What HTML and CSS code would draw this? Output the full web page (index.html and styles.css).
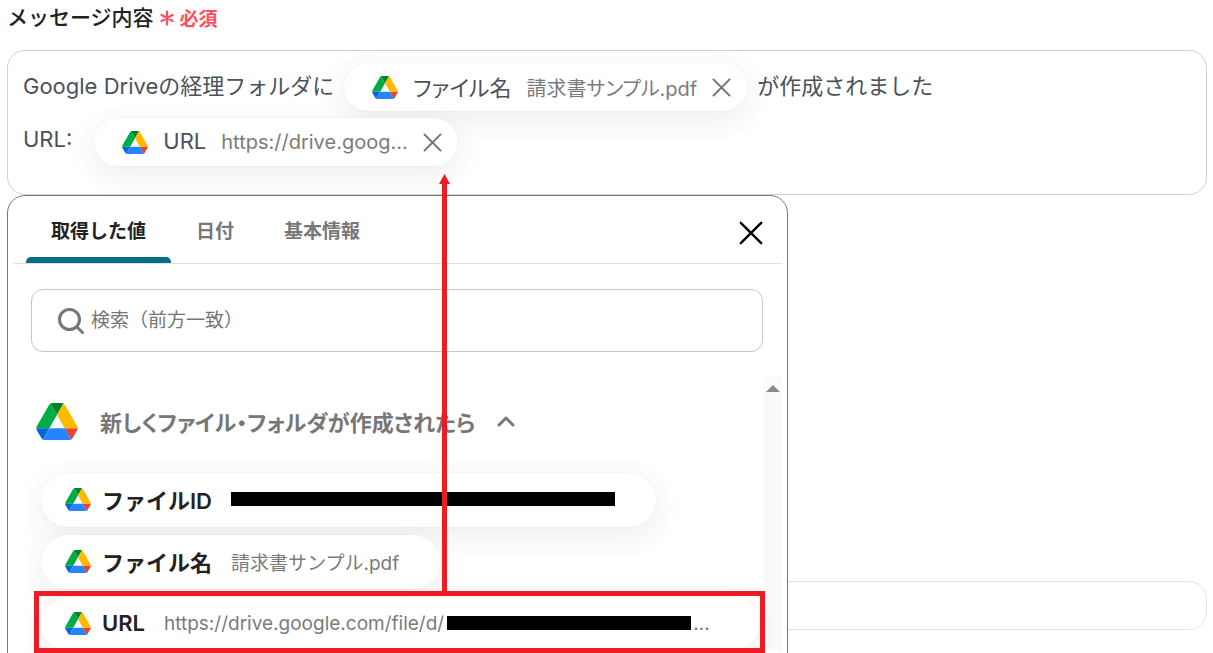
FILE: index.html
```html
<!DOCTYPE html>
<html lang="ja">
<head>
  <meta charset="UTF-8">
  <meta name="viewport" content="width=device-width, initial-scale=1.0">
  <title>メッセージ内容</title>
  <link rel="stylesheet" href="styles.css">
</head>
<body>
  <svg class="defs" aria-hidden="true">
    <symbol id="drive" viewBox="0 0 87.3 78">
      <path fill="#0066da" d="m6.6 66.85 3.85 6.65c.8 1.4 1.95 2.5 3.3 3.3l13.75-23.8h-27.5c0 1.55.4 3.1 1.2 4.5z"/>
      <path fill="#00ac47" d="m43.65 25-13.75-23.8c-1.35.8-2.5 1.9-3.3 3.3l-25.4 44a9.06 9.06 0 0 0 -1.2 4.5h27.5z"/>
      <path fill="#ea4335" d="m73.55 76.8c1.35-.8 2.5-1.9 3.3-3.3l1.6-2.75 7.65-13.25c.8-1.4 1.2-2.95 1.2-4.5h-27.5l5.85 11.5z"/>
      <path fill="#00832d" d="m43.65 25 13.75-23.8c-1.35-.8-2.9-1.2-4.5-1.2h-18.5c-1.6 0-3.15.45-4.5 1.2z"/>
      <path fill="#2684fc" d="m59.8 53h-32.3l-13.75 23.8c1.35.8 2.9 1.2 4.5 1.2h50.8c1.6 0 3.15-.45 4.5-1.2z"/>
      <path fill="#ffba00" d="m73.4 26.5-12.7-22c-.8-1.4-1.95-2.5-3.3-3.3l-13.75 23.8 16.15 28h27.45c0-1.55-.4-3.1-1.2-4.5z"/>
    </symbol>
    <symbol id="cross" viewBox="0 0 20 20">
      <path d="M1.5 1.5l17 17M18.5 1.5l-17 17" fill="none" stroke="currentColor" stroke-linecap="round"/>
    </symbol>
  </svg>

  <main class="page">
    <div class="field-label">
      <span id="message-label">メッセージ内容</span>
      <span class="required">
        <svg class="asterisk" viewBox="0 0 14 16"><path d="M7 1.5v13M1.5 5l11 6M12.5 5l-11 6" fill="none" stroke="currentColor" stroke-width="2.2" stroke-linecap="round"/></svg>
        必須
      </span>
    </div>

    <div class="field">
      <div class="editor" role="textbox" aria-labelledby="message-label" contenteditable="true">
        <div class="line">
          <span class="text">Google Driveの経理フォルダに</span>
          <span class="chip" contenteditable="false">
            <svg class="drive-sm"><use href="#drive"/></svg>
            <span class="chip-name">ファイル名</span>
            <span class="chip-value">請求書サンプル.pdf</span>
            <button type="button" class="chip-remove" aria-label="削除"><svg><use href="#cross"/></svg></button>
          </span>
          <span class="text">が作成されました</span>
        </div>
        <div class="line line-url">
          <span class="text">URL:</span>
          <span class="chip" contenteditable="false">
            <svg class="drive-sm"><use href="#drive"/></svg>
            <span class="chip-name">URL</span>
            <span class="chip-value">https://drive.goog...</span>
            <button type="button" class="chip-remove" aria-label="削除"><svg><use href="#cross"/></svg></button>
          </span>
        </div>
      </div>

      <section class="picker">
        <div class="picker-head">
          <div class="tabs" role="tablist">
            <button type="button" role="tab" class="tab active" aria-selected="true">取得した値</button>
            <button type="button" role="tab" class="tab">日付</button>
            <button type="button" role="tab" class="tab">基本情報</button>
          </div>
          <button type="button" class="picker-close" aria-label="閉じる"><svg><use href="#cross"/></svg></button>
        </div>

        <label class="search">
          <svg viewBox="0 0 26 26"><g fill="none" stroke="currentColor" stroke-width="3" stroke-linecap="round"><circle cx="11.5" cy="11.5" r="10"/><path d="M19 19l5.5 5.5"/></g></svg>
          <input type="text" placeholder="検索（前方一致）" aria-label="検索（前方一致）">
        </label>

        <div class="picker-body">
          <div class="group">
            <button type="button" class="group-head">
              <svg class="drive-lg"><use href="#drive"/></svg>
              <span>新しくファイル・フォルダが作成されたら</span>
              <svg class="chevron" viewBox="0 0 18 12"><path d="M2 10l7-7 7 7" fill="none" stroke="currentColor" stroke-width="3" stroke-linecap="round" stroke-linejoin="round"/></svg>
            </button>
            <ul class="values">
              <li>
                <button type="button" class="value">
                  <svg class="drive-sm"><use href="#drive"/></svg>
                  <span class="value-name">ファイルID</span>
                  <span class="masked masked-id"></span>
                </button>
              </li>
              <li>
                <button type="button" class="value">
                  <svg class="drive-sm"><use href="#drive"/></svg>
                  <span class="value-name">ファイル名</span>
                  <span class="value-text">請求書サンプル.pdf</span>
                </button>
              </li>
              <li class="highlighted">
                <button type="button" class="value value-wide">
                  <svg class="drive-sm"><use href="#drive"/></svg>
                  <span class="value-name">URL</span>
                  <span class="value-text">https://drive.google.com/file/d/</span>
                  <span class="masked masked-url"></span>
                  <span class="value-text">...</span>
                </button>
                <div class="marker">
                  <svg class="marker-head" viewBox="0 0 11 10"><path d="M5.5 0L11 10H0z" fill="currentColor"/></svg>
                </div>
              </li>
            </ul>
          </div>
          <div class="scrollbar"></div>
        </div>
      </section>
    </div>

    <input type="text" class="next-field" aria-label="入力欄">
  </main>
</body>
</html>
```
FILE: styles.css
```css
* {
  box-sizing: border-box;
}

body {
  margin: 0;
  background: #fff;
  color: #222;
  font-family: Inter, "Noto Sans CJK JP", sans-serif;
  font-size: 22px;
}

button,
input {
  font: inherit;
  color: inherit;
  border: none;
  background: none;
  padding: 0;
}

button {
  cursor: pointer;
}

.defs {
  display: none;
}

.page {
  height: 100vh;
  overflow: hidden;
  padding: 0 6px 0 7px;
}

.field-label {
  display: flex;
  align-items: center;
  gap: 6px;
  height: 32px;
  margin-bottom: 18px;
  font-size: 21px;
  font-weight: 500;
}

.required {
  display: flex;
  align-items: center;
  gap: 6px;
  padding-top: 3px;
  color: #ff4d63;
  font-size: 19px;
  font-weight: 700;
}

.asterisk {
  width: 14px;
  height: 16px;
}

.field {
  position: relative;
}

.editor {
  display: flex;
  flex-direction: column;
  gap: 7px;
  min-height: 145px;
  padding: 12px 15px;
  border: 1px solid #cdd1da;
  border-radius: 18px;
  color: #4b5159;
  outline: none;
}

.line {
  display: flex;
  align-items: center;
  gap: 10px;
  height: 48px;
  white-space: nowrap;
}

.line-url {
  gap: 22px;
}

.text {
  padding-bottom: 6px;
}

.chip,
.value {
  display: flex;
  align-items: center;
  border-radius: 30px;
  background: #fff;
  box-shadow: 0 8px 30px rgba(0, 0, 0, 0.08), 0 0 2px rgba(0, 0, 0, 0.06);
}

.chip {
  gap: 15px;
  height: 48px;
  padding: 0 16px 0 28px;
  font-feature-settings: "palt";
}

.chip-name {
  padding-bottom: 3px;
}

.chip-value {
  color: #7b7b7b;
  font-size: 20px;
}

.value-text {
  color: #7b7b7b;
  font-size: 19px;
}

.drive-sm {
  flex: none;
  width: 26px;
  height: 23px;
}

.chip-remove {
  display: flex;
  color: #707070;
}

.chip-remove svg {
  width: 19px;
  height: 19px;
  stroke-width: 2;
}

.picker {
  position: absolute;
  top: 100%;
  left: 0;
  width: 781px;
  max-width: 100%;
  padding: 0 5px 40px;
  border: 1px solid #777;
  border-radius: 18px;
  background: #fff;
}

.picker-head {
  display: flex;
  align-items: center;
  justify-content: space-between;
  height: 68px;
  padding: 0 19px 0 13px;
  border-bottom: 1px solid #e0e0e0;
}

.tabs {
  display: flex;
  align-self: stretch;
}

.tab {
  padding: 6px 25px 0;
  border-bottom: 6px solid transparent;
  color: #777;
  font-size: 19px;
  font-weight: 700;
}

.tab.active {
  position: relative;
  color: #222;
}

.tab.active::after {
  content: "";
  position: absolute;
  right: 0;
  bottom: -6px;
  left: 0;
  height: 6px;
  border-radius: 5px 5px 0 0;
  background: #086b84;
}

.picker-close {
  display: flex;
  margin-top: 6px;
  color: #000;
}

.picker-close svg {
  width: 24px;
  height: 24px;
  stroke-width: 2;
}

.search {
  display: flex;
  align-items: center;
  gap: 7px;
  height: 63px;
  margin: 25px 19px 0 18px;
  padding: 0 26px;
  border: 1px solid #c6c6c6;
  border-radius: 12px;
  color: #757575;
  font-size: 19px;
}

.search svg {
  flex: none;
  width: 26px;
  height: 26px;
}

.search input {
  flex: 1;
  outline: none;
}

.search input::placeholder {
  color: #757575;
}

.picker-body {
  display: flex;
  margin-top: 25px;
}

.group {
  flex: 1;
  min-width: 0;
}

.group-head {
  display: flex;
  align-items: center;
  gap: 22px;
  height: 88px;
  padding-left: 23px;
  color: #777;
  font-weight: 700;
  font-feature-settings: "palt";
}

.drive-lg {
  width: 42px;
  height: 37px;
}

.chevron {
  width: 18px;
  height: 12px;
}

.values {
  display: flex;
  flex-direction: column;
  gap: 8px;
  margin: 0;
  padding: 8px 5px 0 28px;
  list-style: none;
}

.values li {
  display: flex;
}

.value {
  gap: 19px;
  height: 54px;
  padding: 0 41px 2px 24px;
}

.value .drive-sm {
  margin-right: -8px;
}

.value-wide {
  flex: 1;
}

.value-name {
  font-weight: 600;
}

.masked {
  height: 14px;
  background: #000;
}

.masked-id {
  width: 384px;
}

.masked-url {
  width: 244px;
  margin: 0 -17px 0 -16px;
}

/* red frame and arrow pointing at the inserted value */
.highlighted {
  position: relative;
}

.marker {
  position: absolute;
  inset: -6px -6px -2px -7px;
  border: 5px solid #ed1c24;
  color: #ed1c24;
}

.marker::before {
  content: "";
  position: absolute;
  bottom: 100%;
  left: 403px;
  width: 5px;
  height: 412px;
  background: currentColor;
}

.marker-head {
  position: absolute;
  bottom: calc(100% + 412px);
  left: 400px;
  width: 11px;
  height: 10px;
}

.scrollbar {
  width: 18px;
  padding-top: 8px;
  background: #fafafa;
}

.scrollbar::before {
  content: "";
  display: block;
  width: 14px;
  height: 7px;
  margin: 0 auto;
  background: #8b8b8b;
  clip-path: polygon(50% 0, 100% 100%, 0 100%);
}

.next-field {
  display: block;
  width: 100%;
  height: 49px;
  margin-top: 386px;
  padding: 0 16px;
  border: 1px solid #e3e3e3;
  border-radius: 18px;
}
```
